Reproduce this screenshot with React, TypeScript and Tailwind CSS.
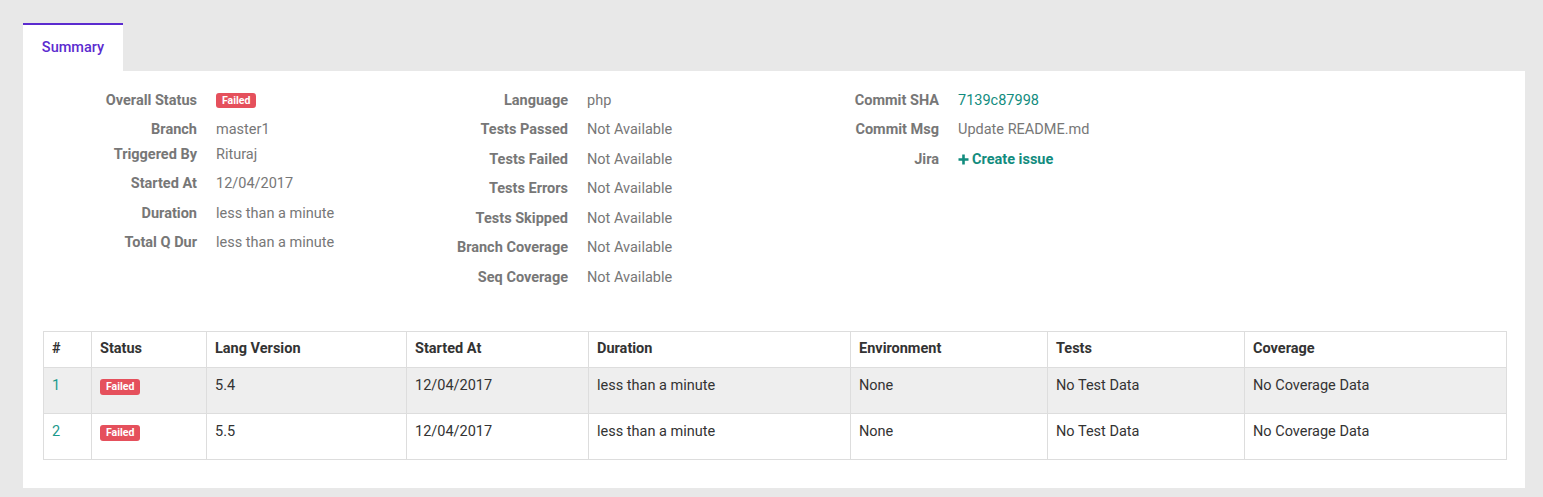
const summaryLeft: Array<[string, React.ReactNode, string]> = [
  ["Overall Status", <Badge key="b" />, "h-[29.5px]"],
  ["Branch", "master1", "h-[24.5px]"],
  ["Triggered By", "Rituraj", "h-[29.5px]"],
  ["Started At", "12/04/2017", "h-[29.5px]"],
  ["Duration", "less than a minute", "h-[29.5px]"],
  ["Total Q Dur", "less than a minute", "h-[29.5px]"],
];

const summaryMid: Array<[string, string]> = [
  ["Language", "php"],
  ["Tests Passed", "Not Available"],
  ["Tests Failed", "Not Available"],
  ["Tests Errors", "Not Available"],
  ["Tests Skipped", "Not Available"],
  ["Branch Coverage", "Not Available"],
  ["Seq Coverage", "Not Available"],
];

const columns = [
  { name: "#", w: "w-[48px]" },
  { name: "Status", w: "w-[115px]" },
  { name: "Lang Version", w: "w-[200px]" },
  { name: "Started At", w: "w-[182px]" },
  { name: "Duration", w: "w-[262px]" },
  { name: "Environment", w: "w-[197px]" },
  { name: "Tests", w: "w-[197px]" },
  { name: "Coverage", w: "w-[262px]" },
];

const jobs = [
  { id: 1, version: "5.4" },
  { id: 2, version: "5.5" },
];

function Badge() {
  return (
    <span className="mt-[2.5px] inline-block rounded-[3px] bg-[#e5505c] px-[6px] align-top text-[10.5px] font-bold leading-[15px] text-white">
      Failed
    </span>
  );
}

function Row({
  label,
  children,
  h = "h-[29.5px]",
}: {
  label: string;
  children: React.ReactNode;
  h?: string;
}) {
  return (
    <div className={`flex items-start pt-[4.75px] ${h}`}>
      <div className="w-[174px] shrink-0 text-right font-bold leading-[20px] text-[#777]">
        {label}
      </div>
      <div className="ml-[19px] h-[20px] leading-[20px] text-[#777]">{children}</div>
    </div>
  );
}

export default function App() {
  return (
    <div
      className="h-[497px] w-full bg-[#e8e8e8] pl-[23px] pr-[18px] pt-[23px] text-[14.5px]"
      style={{ fontFamily: "Roboto, 'Liberation Sans', sans-serif" }}
    >
      <div className="flex">
        <div className="flex h-[48px] w-[100px] items-center justify-center border-t-2 border-[#5b2bcf] bg-white font-medium text-[#5b2bcf]">
          Summary
        </div>
      </div>
      <div className="h-[417px] bg-white pl-[20px] pr-[19px] pt-[15px]">
        <div className="-ml-[20px] flex">
          <div className="w-[371px]">
            {summaryLeft.map(([label, value, h]) => (
              <Row key={label} label={label} h={h}>
                {value}
              </Row>
            ))}
          </div>
          <div className="w-[371px]">
            {summaryMid.map(([label, value]) => (
              <Row key={label} label={label}>
                {value}
              </Row>
            ))}
          </div>
          <div className="w-[371px]">
            <Row label="Commit SHA">
              <span className="text-[#128c7e]">7139c87998</span>
            </Row>
            <Row label="Commit Msg">Update README.md</Row>
            <Row label="Jira">
              <span className="flex items-center gap-[3px] font-bold text-[#128c7e]">
                <svg width="11" height="11" viewBox="0 0 11 11">
                  <path d="M5.5 0.5v10M0.5 5.5h10" stroke="currentColor" strokeWidth="2.6" />
                </svg>
                Create issue
              </span>
            </Row>
          </div>
        </div>

        <table className="mt-[38px] w-[1463px] table-fixed border-collapse border border-[#ddd] text-[#333]">
          <colgroup>
            {columns.map((c) => (
              <col key={c.name} className={c.w} />
            ))}
          </colgroup>
          <thead>
            <tr className="h-[36px]">
              {columns.map((c) => (
                <th
                  key={c.name}
                  className="border border-[#ddd] px-[8px] py-[7px] text-left font-bold leading-[20px]"
                >
                  {c.name}
                </th>
              ))}
            </tr>
          </thead>
          <tbody>
            {jobs.map((j, i) => (
              <tr key={j.id} className={`h-[46px] ${i === 0 ? "bg-[#eee]" : "bg-white"}`}>
                <td className="border border-[#ddd] px-[8px] pt-[8px] align-top leading-[20px] text-[#1a9a8c]">
                  {j.id}
                </td>
                <td className="border border-[#ddd] px-[8px] pt-[11px] align-top leading-[20px]">
                  <span className="inline-block rounded-[3px] bg-[#e5505c] px-[6px] align-top text-[10.5px] font-bold leading-[16px] text-white">
                    Failed
                  </span>
                </td>
                <td className="border border-[#ddd] px-[8px] pt-[8px] align-top leading-[20px]">{j.version}</td>
                <td className="border border-[#ddd] px-[8px] pt-[8px] align-top leading-[20px]">12/04/2017</td>
                <td className="border border-[#ddd] px-[8px] pt-[8px] align-top leading-[20px]">less than a minute</td>
                <td className="border border-[#ddd] px-[8px] pt-[8px] align-top leading-[20px]">None</td>
                <td className="border border-[#ddd] px-[8px] pt-[8px] align-top leading-[20px]">No Test Data</td>
                <td className="border border-[#ddd] px-[8px] pt-[8px] align-top leading-[20px]">No Coverage Data</td>
              </tr>
            ))}
          </tbody>
        </table>
      </div>
    </div>
  );
}
